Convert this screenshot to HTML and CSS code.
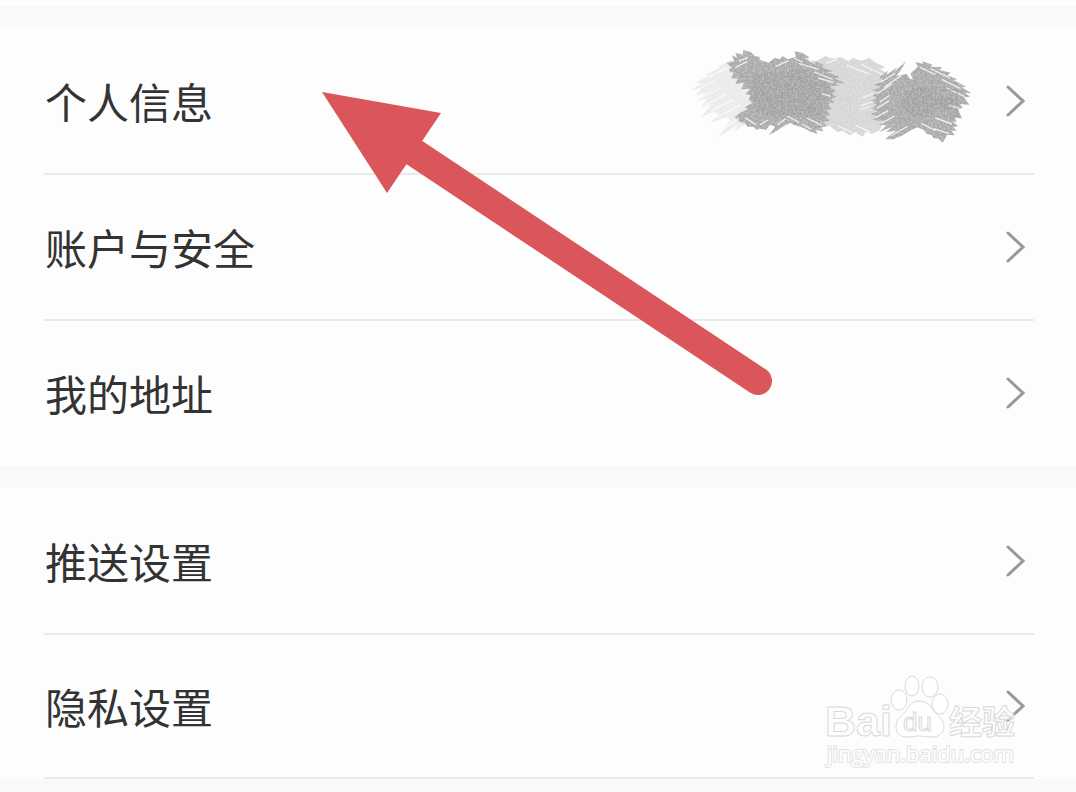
FILE: index.html
```html
<!DOCTYPE html>
<html lang="zh-CN">
<head>
    <meta charset="UTF-8">
    <meta name="viewport" content="width=device-width, initial-scale=1">
    <title>设置</title>
    <link rel="stylesheet" href="styles.css">
</head>
<body>
<main class="settings">
    <ul class="group">
        <li class="item">
            <a class="row" href="#profile">
                <span class="label">个人信息</span>
                <svg class="scribble" viewBox="60 30 900 330" aria-hidden="true">
                    <defs>
                        <filter id="grain" x="0" y="0" width="100%" height="100%">
                            <feTurbulence type="fractalNoise" baseFrequency="0.16" numOctaves="2" seed="4" result="noise"/>
                            <feColorMatrix in="noise" type="matrix" values="0 0 0 0 1  0 0 0 0 1  0 0 0 0 1  0.7 0 0 0 -0.28" result="specks"/>
                            <feComposite in="specks" in2="SourceGraphic" operator="in" result="cut"/>
                            <feMerge>
                                <feMergeNode in="SourceGraphic"/>
                                <feMergeNode in="cut"/>
                            </feMerge>
                        </filter>
                    </defs>
                    <g filter="url(#grain)">
                        <path fill="#ebebeb" d="M212 90L170 112 182 111 132 138 150 136 104 160 130 158 92 180 122 176 108 194 140 188 112 212 144 206 124 232 156 222 122 262 160 246 178 252 150 278 200 262 210 272 176 320 232 286 222 304 262 280 300 230 280 130z"/>
                        <path fill="#d6d6d6" d="M468 94L496 78 518 86 544 82 566 94 578 84 604 92 628 84 650 100 676 112 660 116 690 138 680 170 700 210 676 260 660 300 636 312 620 304 608 320 584 306 570 316 548 302 532 306 510 288 490 290 470 200z"/>
                        <path fill="#a9a9a9" d="M216 76L232 84 226 68 248 74 250 60 272 66 284 78 298 80 300 90 326 98 344 84 360 88 368 78 384 88 408 80 404 64 426 68 446 80 444 90 470 96 490 104 486 112 520 124 500 126 538 140 526 146 556 160 524 158 536 168 508 168 528 184 514 190 530 200 512 208 524 216 504 222 514 238 500 242 510 254 496 260 510 272 490 276 500 288 484 292 490 304 466 300 474 312 448 304 436 296 422 290 400 284 392 278 372 288 354 300 326 316 346 290 330 284 318 300 300 296 290 300 280 290 262 290 254 278 240 276 224 262 238 250 264 236 254 232 278 218 266 210 272 196 256 192 272 176 244 178 252 158 226 162 234 146 212 144 222 130 206 122 214 112 200 98 222 94z"/>
                        <path fill="#a9a9a9" d="M658 142L684 122 678 136 712 112 700 128 738 94 720 124 708 138 740 132 748 144 758 150 752 130 774 110 766 96 790 102 786 94 818 104 810 110 846 112 838 120 872 128 862 136 892 148 880 150 918 170 906 172 934 190 914 188 930 200 912 202 928 224 900 222 908 234 894 236 906 266 884 262 890 276 878 274 894 288 880 292 890 302 874 302 884 316 862 314 848 338 836 326 820 324 814 314 800 312 792 300 772 292 754 300 728 316 700 328 676 328 694 312 710 302 678 306 696 290 658 306 680 286 656 284 672 274 636 270 656 260 630 252 654 244 636 236 650 224 632 212 652 204 638 196 660 186 636 182 664 170 640 164 672 154z"/>
                        <path class="core" d="M280 135L330 125 370 130 420 112 470 140 510 165 500 200 480 260 410 255 350 265 290 245 270 200zM740 180L790 165 830 190 850 220 800 260 750 255 720 225z"/>
                    </g>
                    <g class="hatch">
                        <path d="M226 112l36-17M236 94l28-12M346 110l40-18M402 84l24 12M416 100l60 18M436 84l28 16M462 126l56 22M474 144l48 14M484 190l28 9M426 282l28 16M382 258l36 20M352 284l26-18M256 264l32 20M300 284l24-14M440 264l46 22"/>
                        <path d="M662 156l44-26M672 172l52-36M650 192l46-30M660 216l28-20M650 236l38-24M648 262l36-20M664 280l40-22M692 318l52-30M780 112l46 22M812 116l58 28M846 148l56 28M860 174l54 26M784 280l42 22M822 296l44 14M826 264l50 18M868 226l28 8"/>
                        <path d="M112 178l52-24M122 204l60-30M134 226l64-34M152 244l68-36M172 262l70-38M184 302l54-38M146 142l44-24M174 128l30-16M498 100l34-12M560 106l68 26M602 102l66 32M536 288l40 20M586 286l46 20M606 204l34-14M604 226l38-12M600 240l30-12"/>
                    </g>
                    <path class="smudge" d="M838 180h52v80h-14M846 196v50M856 206h20v30h-20zM856 220h20"/>
                </svg>
                <svg class="chevron" viewBox="0 0 20 32" aria-hidden="true"><path d="M3 2L18 16 3 30"/></svg>
            </a>
        </li>
        <li class="item">
            <a class="row" href="#security">
                <span class="label">账户与安全</span>
                <svg class="chevron" viewBox="0 0 20 32" aria-hidden="true"><path d="M3 2L18 16 3 30"/></svg>
            </a>
        </li>
        <li class="item">
            <a class="row" href="#address">
                <span class="label">我的地址</span>
                <svg class="chevron" viewBox="0 0 20 32" aria-hidden="true"><path d="M3 2L18 16 3 30"/></svg>
            </a>
        </li>
    </ul>
    <ul class="group">
        <li class="item">
            <a class="row" href="#push">
                <span class="label">推送设置</span>
                <svg class="chevron" viewBox="0 0 20 32" aria-hidden="true"><path d="M3 2L18 16 3 30"/></svg>
            </a>
        </li>
        <li class="item lined">
            <a class="row" href="#privacy">
                <span class="label">隐私设置</span>
                <svg class="chevron" viewBox="0 0 20 32" aria-hidden="true"><path d="M3 2L18 16 3 30"/></svg>
            </a>
        </li>
    </ul>

    <svg class="arrow" viewBox="0 0 452 306" aria-hidden="true">
        <path class="shaft" d="M90 59L436 289"/>
        <path class="head" d="M0 0L119 21 65 101z"/>
    </svg>

    <svg class="watermark" viewBox="0 0 205 110">
        <text class="brand" x="5" y="67">Bai</text>
        <g class="paw">
            <ellipse cx="79" cy="31" rx="8" ry="10"/>
            <ellipse cx="92" cy="17" rx="7" ry="10"/>
            <ellipse cx="110" cy="18" rx="8" ry="10"/>
            <ellipse cx="120" cy="35" rx="8" ry="10"/>
            <path d="M99 32C92 32 89 37 86 42C82 47 76 50 76 58C76 65 81 68 87 68C92 68 95 67 99 67C104 67 107 68 112 68C119 68 124 64 124 57C124 50 117 47 113 41C110 36 106 32 99 32z"/>
        </g>
        <text class="du" x="83" y="62">du</text>
        <text class="exp" x="129" y="65">经验</text>
        <text class="site" x="7" y="93">jingyan.baidu.com</text>
    </svg>
</main>
</body>
</html>
```
FILE: styles.css
```css
* {
    box-sizing: border-box;
}
body {
    margin: 0;
    padding-top: 6px;
    background: #fdfdfd;
    font-family: "Noto Sans CJK SC", "Liberation Sans", sans-serif;
    color: #333;
}
.settings {
    position: relative;
    border-bottom: 14px solid #f9f9f9;
}
.group {
    margin: 0;
    padding: 1px 42px 0 44px;
    list-style: none;
    border-top: 22px solid #f9f9f9;
}
.item {
    border-bottom: 2px solid #eaeaea;
}
.item:last-child {
    margin-bottom: -1px;
    border-bottom-color: transparent;
}
.item.lined {
    margin-bottom: 0;
    border-bottom-color: #eaeaea;
}
.row {
    display: flex;
    align-items: center;
    height: 144px;
    padding: 0 9px 0 1px;
    color: inherit;
    text-decoration: none;
}
.lined .row {
    height: 142px;
}
.label {
    flex: 1;
    font-size: 42px;
    line-height: 60px;
}
.chevron {
    width: 20px;
    height: 32px;
    fill: none;
    stroke: #999;
    stroke-width: 3;
    stroke-linecap: round;
}
.scribble {
    width: 300px;
    height: 110px;
    margin-right: 25px;
    margin-bottom: 12px;
}
.core {
    fill: #9c9c9c;
    opacity: 0.5;
}
.hatch {
    fill: none;
    stroke: #fdfdfd;
    stroke-width: 4;
    opacity: 0.8;
}
.smudge {
    fill: none;
    stroke: #8f8f8f;
    stroke-width: 5;
    opacity: 0.4;
}
.arrow {
    position: absolute;
    left: 322px;
    top: 86px;
    width: 452px;
    height: 306px;
}
.shaft {
    stroke: #db565b;
    stroke-width: 28;
    stroke-linecap: round;
}
.head {
    fill: #db565b;
}
.watermark {
    position: absolute;
    right: 51px;
    bottom: 0;
    width: 205px;
    height: 110px;
    fill: #fff;
    fill-opacity: 0.8;
    stroke: #d9d9d9;
    stroke-width: 1;
}
.brand {
    font: bold 43px "Liberation Sans", sans-serif;
}
.du {
    font: 26px "Liberation Sans", sans-serif;
}
.exp {
    font: bold 33px "Noto Sans CJK SC", sans-serif;
}
.site {
    font: 22px "Open Sans", sans-serif;
    fill-opacity: 1;
    stroke: #e2e2e2;
    stroke-width: 2;
    paint-order: stroke;
}
```
